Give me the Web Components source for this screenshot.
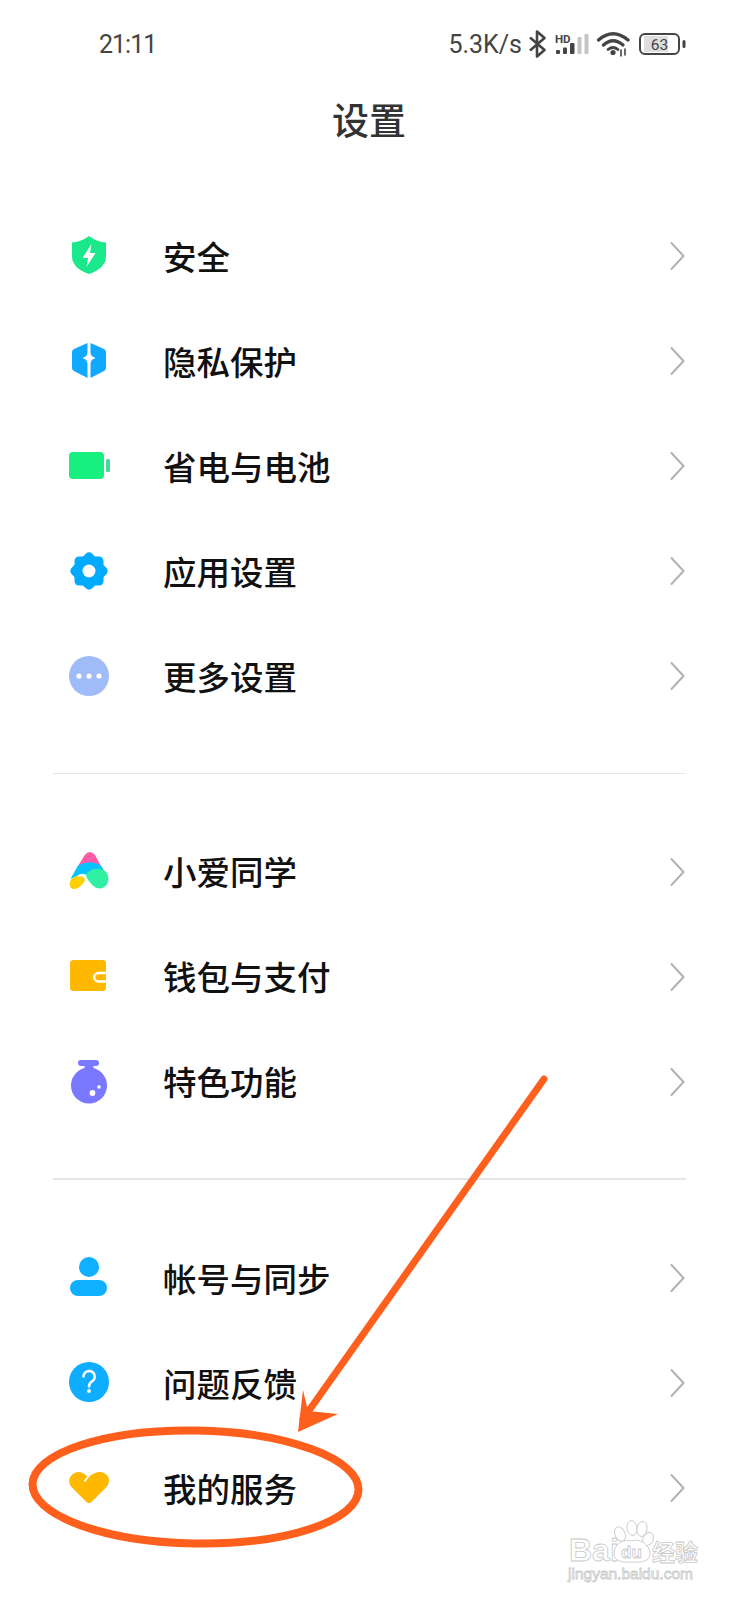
<!DOCTYPE html>
<html lang="zh">
<head>
<meta charset="utf-8">
<title>设置</title>
<style>
  html, body { margin: 0; padding: 0; background: #fff; }
  body { font-family: "Noto Sans CJK SC", "Noto Sans", sans-serif; }
  settings-page { width: 738px; height: 1600px; }
</style>
</head>
<body>
<settings-page>
  <status-bar time="21:11" speed="5.3K/s" level="63"></status-bar>
  <page-title>设置</page-title>

  <settings-group>
    <settings-row><app-icon slot="icon" name="shield"></app-icon>安全</settings-row>
    <settings-row><app-icon slot="icon" name="privacy"></app-icon>隐私保护</settings-row>
    <settings-row><app-icon slot="icon" name="battery"></app-icon>省电与电池</settings-row>
    <settings-row><app-icon slot="icon" name="gear"></app-icon>应用设置</settings-row>
    <settings-row><app-icon slot="icon" name="more"></app-icon>更多设置</settings-row>
  </settings-group>
  <settings-group divided style="--after-line: 46px">
    <settings-row><app-icon slot="icon" name="xiaoai"></app-icon>小爱同学</settings-row>
    <settings-row><app-icon slot="icon" name="wallet"></app-icon>钱包与支付</settings-row>
    <settings-row><app-icon slot="icon" name="flask"></app-icon>特色功能</settings-row>
  </settings-group>
  <settings-group divided>
    <settings-row><app-icon slot="icon" name="user"></app-icon>帐号与同步</settings-row>
    <settings-row><app-icon slot="icon" name="help"></app-icon>问题反馈</settings-row>
    <settings-row><app-icon slot="icon" name="heart"></app-icon>我的服务</settings-row>
  </settings-group>

  <photo-markup></photo-markup>
  <baidu-mark></baidu-mark>
</settings-page>

<script>
class SettingsPage extends HTMLElement {
  constructor() {
    super();
    this.attachShadow({ mode: 'open' }).innerHTML = `
      <style>
        :host { display: block; position: relative; overflow: hidden; background: #fff; color: #111; }
      </style>
      <slot></slot>
    `;
  }
}

class StatusBar extends HTMLElement {
  connectedCallback() {
    const level = this.getAttribute('level');
    this.attachShadow({ mode: 'open' }).innerHTML = `
      <style>
        :host {
          display: flex;
          align-items: center;
          height: 88px;
          padding: 0 52px 0 99px;
          font-family: Roboto, "Liberation Sans", sans-serif;
          font-size: 25px;
          color: #444;
        }
        .time { flex: 1; letter-spacing: -1px; }
        .speed { letter-spacing: 0; }
        svg { display: block; flex: none; }
        .bt { margin-left: 6px; }
        .signal { margin-left: 8px; }
        .wifi { margin-left: 8px; }
        .batt { margin-left: 9px; }
        text { font-family: Roboto, "Liberation Sans", sans-serif; }
      </style>
      <span class="time">${this.getAttribute('time')}</span>
      <span class="speed">${this.getAttribute('speed')}</span>
      <svg class="bt" width="19" height="28" viewBox="0 0 19 28" fill="none" stroke="#444" stroke-width="2.6" stroke-linejoin="round">
        <path d="M2 7.5 L16.5 20 L9 26.5 V1.5 L16.5 8 L2 20.5"/>
      </svg>
      <svg class="signal" width="34" height="24" viewBox="0 0 34 24">
        <text x="0" y="10.5" font-size="11.5" font-weight="700" fill="#444">HD</text>
        <rect x="1" y="18" width="4" height="4" rx="1" fill="#444"/>
        <rect x="8" y="15.5" width="4" height="6.5" rx="1" fill="#444"/>
        <rect x="15" y="11" width="4.5" height="11" rx="1" fill="#444"/>
        <rect x="22.5" y="5" width="4" height="17" rx="1" fill="#c4c4c4"/>
        <rect x="29.5" y="2" width="4" height="20" rx="1" fill="#c4c4c4"/>
      </svg>
      <svg class="wifi" width="33" height="26" viewBox="0 0 33 26" fill="none" stroke="#444" stroke-linecap="round">
        <path d="M1.5 9 Q16 -3.5 31 9" stroke-width="3.4"/>
        <path d="M6.5 14 Q16 5.5 26 14" stroke-width="3.4"/>
        <path d="M11 18.5 Q16 14.5 21 18.5" stroke-width="2.8"/>
        <circle cx="16" cy="21.5" r="2.6" fill="#444" stroke="none"/>
        <path d="M24 19 V25 M28 18 V24" stroke-width="1.6"/>
      </svg>
      <svg class="batt" width="47" height="22" viewBox="0 0 47 22">
        <rect x="5" y="3" width="24" height="16" fill="#dedede"/>
        <rect x="1" y="1" width="39" height="20" rx="5" fill="none" stroke="#444" stroke-width="2"/>
        <text x="20.5" y="17" font-size="15.5" fill="#444" text-anchor="middle">${level}</text>
        <rect x="43.5" y="7" width="3" height="8" rx="1.5" fill="#444"/>
      </svg>
    `;
  }
}

class PageTitle extends HTMLElement {
  constructor() {
    super();
    this.attachShadow({ mode: 'open' }).innerHTML = `
      <style>
        :host {
          display: flex;
          justify-content: center;
          align-items: center;
          height: 62px;
          padding-bottom: 4px;
          margin-bottom: 50.5px;
          font-size: 37px;
          font-weight: 500;
          color: #333;
        }
      </style>
      <slot></slot>
    `;
  }
}

class SettingsGroup extends HTMLElement {
  constructor() {
    super();
    this.attachShadow({ mode: 'open' }).innerHTML = `
      <style>
        :host { display: block; }
        :host([divided]) .line { display: block; }
        .line {
          display: none;
          height: 1.5px;
          margin: 43px 52px var(--after-line, 47px) 53px;
          background: #e6e6e6;
        }
      </style>
      <div class="line"></div>
      <slot></slot>
    `;
  }
}

class SettingsRow extends HTMLElement {
  constructor() {
    super();
    this.attachShadow({ mode: 'open' }).innerHTML = `
      <style>
        :host {
          display: flex;
          align-items: center;
          height: 105px;
          padding: 0 53px 0 65px;
          font-size: 33.5px;
          font-weight: 500;
          color: #111;
        }
        .label { flex: 1; margin-left: 50px; padding-bottom: 4px; }
        .chev { display: block; margin-bottom: 2px; }
      </style>
      <slot name="icon"></slot>
      <span class="label"><slot></slot></span>
      <svg class="chev" width="15" height="30" viewBox="0 0 15 30" fill="none" stroke="#b2b2b2" stroke-width="2" stroke-linecap="round" stroke-linejoin="round">
        <path d="M1.5 2 L13.5 15 L1.5 28"/>
      </svg>
    `;
  }
}

const ICONS = {
  shield: `<path fill="#1be88a" d="M24 3 C28 6 34 9 41 9.5 V24 C41 32 33 38 24 41 C15 38 7 32 7 24 V9.5 C14 9 20 6 24 3 Z"/>
           <path fill="#fff" d="M26.5 11 L17.5 25 H23 L21.5 34 L30.5 20 H25 Z"/>`,
  privacy: `<path fill="#10a9ff" d="M22.5 5 V14 C22.5 17 21 19 18 20 C21 21 22.5 23 22.5 26 V40 L9 33 Q7 32 7 30 V14 Q7 12 9 11 Z"/>
            <path fill="#10a9ff" d="M25.5 5 V14 C25.5 17 27 19 30 20 C27 21 25.5 23 25.5 26 V40 L39 33 Q41 32 41 30 V14 Q41 12 39 11 Z"/>
            <path fill="#fff" d="M24 13 C24.6 17 26.5 19 30.5 20 C26.5 21 24.6 23 24 27 C23.4 23 21.5 21 17.5 20 C21.5 19 23.4 17 24 13 Z"/>`,
  battery: `<rect x="4" y="9" width="35" height="27" rx="4" fill="#17f07f"/>
            <rect x="41" y="16" width="4" height="13" rx="1.5" fill="#3fdc97"/>`,
  gear: `<g fill="#00aaff"><rect x="9.5" y="8.5" width="29" height="29" rx="4.5"/>
         <rect x="9.5" y="8.5" width="29" height="29" rx="4.5" transform="rotate(45 24 23)"/></g>
         <circle cx="24" cy="23" r="6.5" fill="#fff"/>`,
  more: `<circle cx="24" cy="23" r="20" fill="#9fbbf8"/>
         <g fill="#fff"><circle cx="14" cy="23" r="2.6"/><circle cx="24" cy="23" r="2.6"/><circle cx="34" cy="23" r="2.6"/></g>`,
  xiaoai: `<path fill="#ff5aa5" d="M13 17 L19.8 6 Q24.9 0 30 6 L36 17 Q25 11 13 17 Z"/>
           <path fill="#06c3ff" d="M5.5 30 L13 16.5 Q25 10 36 16.5 L41 25 Q32 19 24 28 Q18 22 12 27 Z"/>
           <path fill="#2ff0a2" d="M22 24 C27 19 36 18 41 23 C46 29 43 39 35 39.5 C30 39.5 27 36 24 32 C21.5 29 20.5 26 22 24 Z"/>
           <path fill="#ffd000" d="M5 33 C6 29 10 27 14 27.5 C19 27 21 30 19 33 C17 36 13 40 10 40 C6 40.5 4 37 5 33 Z"/>`,
  wallet: `<rect x="5" y="6" width="36" height="31" rx="3.5" fill="#ffb800"/>
           <path d="M42 19 H33.5 a4 4 0 0 0 0 8.5 H42" fill="none" stroke="#fff" stroke-width="2.4"/>`,
  flask: `<rect x="13" y="1" width="21" height="6" rx="3" fill="#7a78ff"/>
          <rect x="19.5" y="5" width="9" height="8" fill="#7a78ff"/>
          <circle cx="24" cy="26.5" r="18" fill="#7a78ff"/>
          <circle cx="27.5" cy="34" r="2.9" fill="#fff"/><circle cx="34" cy="28" r="1.8" fill="#fff"/>`,
  user: `<circle cx="24" cy="12" r="10" fill="#0fb0ff"/><rect x="5" y="25" width="37" height="16" rx="8" fill="#0fb0ff"/>`,
  help: `<circle cx="24" cy="22" r="20" fill="#0fadff"/>
         <path d="M18.5 16.5 a5.6 5.6 0 1 1 8.6 4.8 c-2.2 1.5 -3.1 2.7 -3.1 5.2" fill="none" stroke="#fff" stroke-width="2.5" stroke-linecap="round"/>
         <circle cx="24" cy="31" r="1.9" fill="#fff"/>`,
  heart: `<path fill="#ffb800" d="M21 36.5 L6.5 22 C1.5 16 5 8 13 7 C17 7 20 9 23 12 C27 9 31 7 35.5 7 C44 8 46.5 16 41.5 22 L27 36.5 Q24 39.5 21 36.5 Z"/>
          <path d="M25 9 L19.5 16.5" fill="none" stroke="#fff" stroke-width="2"/>`
};

class AppIcon extends HTMLElement {
  connectedCallback() {
    this.attachShadow({ mode: 'open' }).innerHTML = `
      <style>
        :host { display: block; width: 48px; height: 48px; flex: none; }
        svg { display: block; }
      </style>
      <svg width="48" height="48" viewBox="0 0 48 48">${ICONS[this.getAttribute('name')]}</svg>
    `;
  }
}

// the hand drawn red circle and arrow sit over the list
class PhotoMarkup extends HTMLElement {
  constructor() {
    super();
    this.attachShadow({ mode: 'open' }).innerHTML = `
      <style>
        :host { display: block; position: absolute; left: 0; top: 0; width: 738px; height: 1600px; pointer-events: none; }
        svg { display: block; }
      </style>
      <svg width="738" height="1600" viewBox="0 0 738 1600" fill="none">
        <ellipse cx="195.5" cy="1487" rx="163" ry="56.5" transform="rotate(1 196 1488)" stroke="#ff5f1c" stroke-width="8"/>
        <path d="M544 1079 L303 1419" stroke="#ff5f1c" stroke-width="7" stroke-linecap="round"/>
        <path d="M298 1432 L303 1390 L308 1411 L338 1414 Z" fill="#ff5f1c"/>
      </svg>
    `;
  }
}

class BaiduMark extends HTMLElement {
  constructor() {
    super();
    this.attachShadow({ mode: 'open' }).innerHTML = `
      <style>
        :host { display: block; position: absolute; left: 566px; top: 1518px; width: 140px; height: 70px; }
        svg { display: block; }
        text {
          font-family: "Liberation Sans", sans-serif;
          fill: #fff;
          stroke: #c9c9c9;
          stroke-width: 0.8;
        }
        .cn { font-family: "Noto Sans CJK SC", sans-serif; }
      </style>
      <svg width="140" height="70" viewBox="0 0 140 70">
        <text x="3" y="43" font-size="32" font-weight="700">Bai</text>
        <g fill="#fff" stroke="#c9c9c9" stroke-width="0.9">
          <ellipse cx="54" cy="16" rx="5" ry="7.5" transform="rotate(-25 54 16)"/>
          <ellipse cx="66" cy="10" rx="5" ry="7.5" transform="rotate(-8 66 10)"/>
          <ellipse cx="76" cy="11" rx="5" ry="7.5" transform="rotate(8 76 11)"/>
          <ellipse cx="82" cy="21" rx="5" ry="7" transform="rotate(25 82 21)"/>
          <path d="M48 35 C49 25 58 21 65 23 C74 20 83 26 84 35 C85 43 75 45 66 44 C57 45 47 43 48 35 Z"/>
        </g>
        <text x="55" y="40" font-size="17" font-weight="700">du</text>
        <text class="cn" x="86" y="43" font-size="23" font-weight="700">经验</text>
        <text x="2" y="61" font-size="15.5">jingyan.baidu.com</text>
      </svg>
    `;
  }
}

customElements.define('settings-page', SettingsPage);
customElements.define('status-bar', StatusBar);
customElements.define('page-title', PageTitle);
customElements.define('settings-group', SettingsGroup);
customElements.define('settings-row', SettingsRow);
customElements.define('app-icon', AppIcon);
customElements.define('photo-markup', PhotoMarkup);
customElements.define('baidu-mark', BaiduMark);
</script>
</body>
</html>
